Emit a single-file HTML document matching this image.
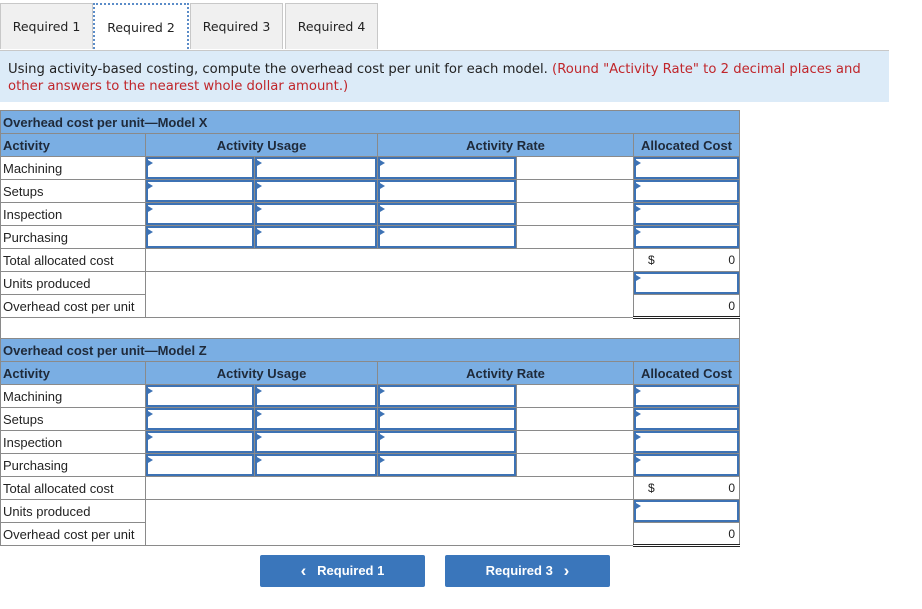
<!DOCTYPE html>
<html><head><style>
body{margin:0;width:922px;height:609px;background:#fff;position:relative;font-family:"Liberation Sans",Arial,sans-serif;overflow:hidden}
.tab{position:absolute;top:3px;height:46px;background:#f0f0f0;border:1px solid #c8c8c8;border-bottom:none;font:13px "DejaVu Sans",sans-serif;font-size:12.5px;color:#222;text-align:center;line-height:46px;box-sizing:border-box}
.line{position:absolute;left:0;top:50px;width:889px;height:1px;background:#c8c8c8}
.instr{position:absolute;left:0;top:51px;width:889px;height:51px;background:#dcebf8;box-sizing:border-box;padding:10px 8px;font:13.2px/17px "DejaVu Sans",sans-serif;color:#222}
.instr span{color:#c0262b}
table{position:absolute;left:0;border-collapse:collapse;table-layout:fixed;width:739px;font-size:13px;color:#222}
td{border:1px solid #8a8a8a;height:23px;padding:0 2px;box-sizing:border-box;position:relative}
tr.t td{background:#7aaee3;font-weight:bold;color:#1f2a3a}
tr.h td{background:#7aaee3;font-weight:bold;color:#1f2a3a;text-align:center}
tr.h td:first-child{text-align:left}
td.i{padding:0}
td.i div{position:absolute;left:0;top:0;right:0;bottom:0;border:2px solid #3d72b4}
td.i div:before{content:"";position:absolute;left:0;top:1px;border-left:5px solid #3d72b4;border-top:3px solid transparent;border-bottom:3px solid transparent}
td.r{text-align:right;padding-right:4px;font-size:12px}
td.dbl{border-bottom:3px double #222}
.btn{position:absolute;top:555px;width:165px;height:32px;background:#3a76bb;border-radius:2px;color:#fff;font-weight:bold;font-size:13px;line-height:32px;text-align:center}
.btn b{font-size:17px;vertical-align:-1px}
</style></head><body>
<div class="tab" style="left:0;width:93px">Required 1</div>
<div class="tab" style="left:93px;width:96px;background:#fff;border:2px dotted #5b8cc8;border-bottom:none">Required 2</div>
<div class="tab" style="left:190px;width:93px">Required 3</div>
<div class="tab" style="left:285px;width:93px">Required 4</div>
<div class="line"></div>
<div class="instr">Using activity-based costing, compute the overhead cost per unit for each model. <span>(Round "Activity Rate" to 2 decimal places and other answers to the nearest whole dollar amount.)</span></div>

<table style="top:110px">
<colgroup><col style="width:145px"><col style="width:109px"><col style="width:123px"><col style="width:139px"><col style="width:117px"><col style="width:106px"></colgroup>
<tr class="t"><td colspan="6">Overhead cost per unit—Model X</td></tr>
<tr class="h"><td>Activity</td><td colspan="2">Activity Usage</td><td colspan="2">Activity Rate</td><td>Allocated Cost</td></tr>
<tr><td>Machining</td><td class="i"><div></div></td><td class="i"><div></div></td><td class="i"><div></div></td><td></td><td class="i"><div></div></td></tr>
<tr><td>Setups</td><td class="i"><div></div></td><td class="i"><div></div></td><td class="i"><div></div></td><td></td><td class="i"><div></div></td></tr>
<tr><td>Inspection</td><td class="i"><div></div></td><td class="i"><div></div></td><td class="i"><div></div></td><td></td><td class="i"><div></div></td></tr>
<tr><td>Purchasing</td><td class="i"><div></div></td><td class="i"><div></div></td><td class="i"><div></div></td><td></td><td class="i"><div></div></td></tr>
<tr><td>Total allocated cost</td><td colspan="4"></td><td class="r"><span style="float:left;padding-left:12px">$</span>0</td></tr>
<tr><td>Units produced</td><td colspan="4" style="border-bottom:none"></td><td class="i"><div></div></td></tr>
<tr><td>Overhead cost per unit</td><td colspan="4" style="border-top:none"></td><td class="r dbl">0</td></tr>
<tr><td colspan="6" style="height:21px"></td></tr>
<tr class="t"><td colspan="6">Overhead cost per unit—Model Z</td></tr>
<tr class="h"><td>Activity</td><td colspan="2">Activity Usage</td><td colspan="2">Activity Rate</td><td>Allocated Cost</td></tr>
<tr><td>Machining</td><td class="i"><div></div></td><td class="i"><div></div></td><td class="i"><div></div></td><td></td><td class="i"><div></div></td></tr>
<tr><td>Setups</td><td class="i"><div></div></td><td class="i"><div></div></td><td class="i"><div></div></td><td></td><td class="i"><div></div></td></tr>
<tr><td>Inspection</td><td class="i"><div></div></td><td class="i"><div></div></td><td class="i"><div></div></td><td></td><td class="i"><div></div></td></tr>
<tr><td>Purchasing</td><td class="i"><div></div></td><td class="i"><div></div></td><td class="i"><div></div></td><td></td><td class="i"><div></div></td></tr>
<tr><td>Total allocated cost</td><td colspan="4"></td><td class="r"><span style="float:left;padding-left:12px">$</span>0</td></tr>
<tr><td>Units produced</td><td colspan="4" style="border-bottom:none"></td><td class="i"><div></div></td></tr>
<tr><td>Overhead cost per unit</td><td colspan="4" style="border-top:none"></td><td class="r dbl">0</td></tr>
</table>

<div class="btn" style="left:260px"><b>&#x2039;</b>&nbsp;&nbsp;&nbsp;Required 1</div>
<div class="btn" style="left:445px">Required 3&nbsp;&nbsp;&nbsp;<b>&#x203A;</b></div>
</body></html>
